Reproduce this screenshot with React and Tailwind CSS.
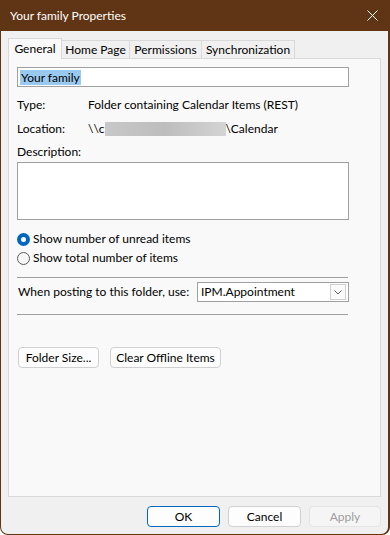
import { useState } from "react";

const font = { fontFamily: 'Lato, "Noto Sans", Arial, sans-serif' };

function Tab({ label, active, width }) {
  if (active) {
    return (
      <div className={`${width} h-[21px] -mb-px z-10 bg-[#f9f9f9] border border-b-0 border-[#d9d9d9] flex items-center justify-center`}>
        {label}
      </div>
    );
  }
  return (
    <div className={`${width} h-[18px] bg-[#f0f0f0] border border-l-0 border-b-0 border-[#d9d9d9] flex items-center justify-center`}>
      {label}
    </div>
  );
}

function Radio({ checked, label }) {
  return (
    <label className="h-4 flex items-center gap-[3px]">
      {checked ? (
        <span className="w-[13px] h-[13px] rounded-full bg-[#0067c0] flex items-center justify-center">
          <span className="w-[5px] h-[5px] rounded-full bg-white" />
        </span>
      ) : (
        <span className="w-[13px] h-[13px] rounded-full border border-[#5c5c5c] bg-[#f7f7f7]" />
      )}
      <span>{label}</span>
    </label>
  );
}

export default function App() {
  const [name] = useState("Your family");

  return (
    <div className="w-[390px] h-[535px] bg-[#603515] rounded-b-[8px] flex flex-col pl-px pr-[2px] pb-px text-[12px] text-black whitespace-nowrap" style={font}>
      {/* Title bar */}
      <div className="h-[31px] flex items-center justify-between pl-[9px] pr-[10px] text-white text-[12px]">
        <span>Your family Properties</span>
        <svg width="11" height="11" viewBox="0 0 11 11" className="text-white">
          <path d="M0.5 0.5 L10.5 10.5 M10.5 0.5 L0.5 10.5" stroke="currentColor" strokeWidth="1" fill="none" />
        </svg>
      </div>

      {/* Body */}
      <div className="flex-1 bg-[#f0f0f0] rounded-b-[7px] flex flex-col pl-[7px] pr-[7px] pt-[7px]">
        <div className="flex items-end">
          <Tab label="General" active width="w-[54px]" />
          <Tab label="Home Page" width="w-[68px]" />
          <Tab label="Permissions" width="w-[72px]" />
          <Tab label="Synchronization" width="w-[93px]" />
        </div>

        <div className="h-[439px] bg-[#f9f9f9] border border-[#d9d9d9] pl-[8px] pt-[8px] flex flex-col">
          <div className="w-[332px] h-[20px] bg-white border border-[#a0a0a0] flex items-center px-[2px]">
            <span className="bg-[#99c9ef] px-px leading-[15px]">{name}</span>
          </div>

          <div className="mt-[10px] h-4 flex items-center">
            <span className="w-[71px]">Type:</span>
            <span>Folder containing Calendar Items (REST)</span>
          </div>

          <div className="mt-[8px] h-4 flex items-center">
            <span className="w-[71px]">Location:</span>
            <span>\\c</span>
            <span className="w-[121px] h-[14px] bg-gradient-to-r from-[#c8c8c8] via-[#bdbdbd] to-[#d4d4d4]" />
            <span>\Calendar</span>
          </div>

          <div className="mt-[7px] h-4 flex items-center">Description:</div>

          <div className="mt-[2px] w-[332px] h-[58px] bg-white border border-[#a0a0a0]" />

          <div className="mt-[11px] flex flex-col gap-[3px]">
            <Radio checked label="Show number of unread items" />
            <Radio label="Show total number of items" />
          </div>

          <div className="mt-[11px] w-[331px] h-px bg-[#a0a0a0]" />

          <div className="mt-[4px] w-[332px] flex items-center justify-between">
            <span className="pl-px">When posting to this folder, use:</span>
            <div className="w-[152px] h-[20px] bg-white border border-[#a0a0a0] flex items-center justify-between pl-[3px] pr-[2px]">
              <span>IPM.Appointment</span>
              <span className="w-[16px] h-[16px] border border-[#d0d0d0] bg-[#fbfbfb] flex items-center justify-center">
                <svg width="8" height="5" viewBox="0 0 8 5">
                  <path d="M0.5 0.5 L4 4 L7.5 0.5" stroke="#606060" strokeWidth="1" fill="none" />
                </svg>
              </span>
            </div>
          </div>

          <div className="mt-[12px] w-[331px] h-px bg-[#a0a0a0]" />

          <div className="mt-[32px] flex gap-[11px] pl-px">
            <button className="w-[81px] h-[21px] rounded-[4px] border border-[#d0d0d0] bg-[#fdfdfd] flex items-center justify-center">
              Folder Size...
            </button>
            <button className="w-[111px] h-[21px] rounded-[4px] border border-[#d0d0d0] bg-[#fdfdfd] flex items-center justify-center">
              Clear Offline Items
            </button>
          </div>
        </div>

        <div className="mt-[9px] flex justify-end gap-[8px]">
          <button className="w-[73px] h-[21px] rounded-[4px] border border-[#0067c0] bg-[#fdfdfd] flex items-center justify-center">
            OK
          </button>
          <button className="w-[73px] h-[21px] rounded-[4px] border border-[#d0d0d0] bg-[#fdfdfd] flex items-center justify-center">
            Cancel
          </button>
          <button className="w-[72px] h-[21px] rounded-[4px] border border-[#e5e5e5] bg-[#f5f5f5] text-[#9d9d9d] flex items-center justify-center">
            Apply
          </button>
        </div>
      </div>
    </div>
  );
}
